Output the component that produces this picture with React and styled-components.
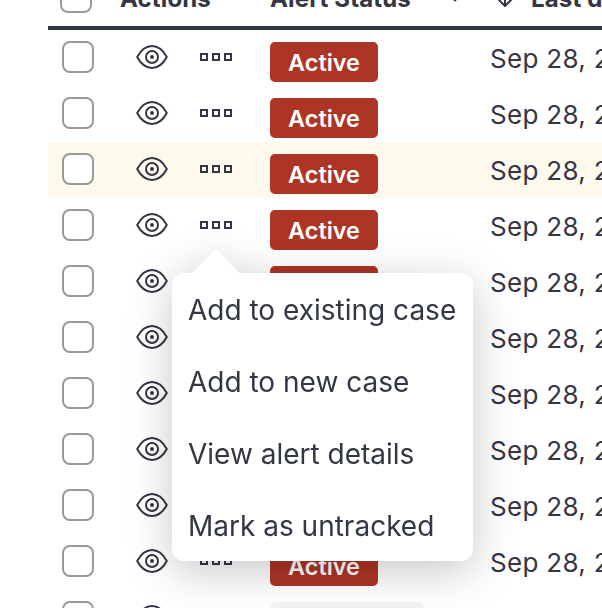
import React from "react";
import styled, { createGlobalStyle } from "styled-components";

const GlobalStyle = createGlobalStyle`
  html, body {
    margin: 0;
    padding: 0;
    background: #ffffff;
    overflow: hidden;
  }
  body {
    font-family: Inter, "Liberation Sans", sans-serif;
    color: #333644;
  }
`;

const Page = styled.div`
  position: relative;
  width: 602px;
  height: 608px;
  overflow: hidden;
  padding-left: 48px;
  box-sizing: border-box;
`;

const HeaderRow = styled.div`
  display: grid;
  grid-template-columns: 72px 150px 220px 1fr;
  height: 56px;
  margin-top: -30px;
  width: 600px;
  border-bottom: 4px solid #333644;
  font-size: 24px;
  font-weight: 700;
  letter-spacing: 0.15px;
  white-space: nowrap;
`;

const HeaderCheckCell = styled.div`
  padding: 11px 0 0 12px;
`;

const HeaderCell = styled.div`
  display: flex;
  align-items: center;
  height: 56px;
`;

const StatusHeader = styled(HeaderCell)`
  gap: 38px;
`;

const SortHeader = styled(HeaderCell)`
  padding-left: 6px;
  gap: 17px;
`;

const Row = styled.div`
  display: grid;
  grid-template-columns: 72px 150px 220px 1fr;
  height: 56px;
  width: 600px;
  background: ${(p) => (p.$highlight ? "#fff8ec" : "transparent")};
`;

const CheckCell = styled.div`
  padding: 11px 0 0 14px;
`;

const Checkbox = styled.div`
  width: 32px;
  height: 32px;
  box-sizing: border-box;
  border: 2px solid #999999;
  border-radius: 8px;
  background: #ffffff;
`;

const ActionsCell = styled.div`
  display: flex;
  align-items: flex-start;
  padding: 15px 0 0 16px;
  gap: 32px;
`;

const Dots = styled.div`
  display: flex;
  gap: 4px;
  margin-top: 8px;
`;

const Dot = styled.span`
  width: 8px;
  height: 8px;
  box-sizing: border-box;
  border: 2px solid #333644;
`;

const StatusCell = styled.div`
  padding-top: 12px;
`;

const Badge = styled.div`
  display: flex;
  align-items: center;
  justify-content: center;
  width: ${(p) => (p.$pending ? "154px" : "108px")};
  height: 40px;
  border-radius: 5px;
  background: ${(p) => (p.$pending ? "#f3f4f6" : "#ad3526")};
  color: #ffffff;
  font-size: 23.4px;
  font-weight: 600;
`;

const DateCell = styled.div`
  font-size: 26px;
  letter-spacing: 0.3px;
  line-height: 30px;
  padding-top: 14px;
  white-space: nowrap;
  overflow: hidden;
`;

const Popover = styled.div`
  position: absolute;
  left: 172px;
  top: 273px;
  width: 301px;
  filter: drop-shadow(0 10px 22px rgba(0, 0, 0, 0.22));
`;

const Arrow = styled.div`
  position: absolute;
  left: 27px;
  top: -17px;
  width: 34px;
  height: 34px;
  background: #ffffff;
  transform: rotate(45deg);
`;

const Menu = styled.div`
  position: relative;
  background: #ffffff;
  border-radius: 12px;
`;

const MenuItem = styled.div`
  display: flex;
  align-items: center;
  height: 72px;
  padding: 2px 0 0 16px;
  box-sizing: border-box;
  font-size: 28px;
  white-space: nowrap;
`;

function Eye() {
  return (
    <svg width="32" height="24" viewBox="0 0 32 24" fill="none" stroke="#333644" strokeWidth="2">
      <path d="M1.2 12C5 5 10 1 16 1C22 1 27 5 30.8 12C27 19 22 23 16 23C10 23 5 19 1.2 12Z" strokeLinejoin="round" />
      <circle cx="16" cy="12" r="6" />
      <circle cx="16" cy="12" r="2" fill="#333644" stroke="none" />
    </svg>
  );
}

function Chevron() {
  return (
    <svg width="12" height="8" viewBox="0 0 12 8" fill="none" stroke="#333644" strokeWidth="2.5">
      <path d="M1 1L6 6L11 1" />
    </svg>
  );
}

function SortDiamond() {
  return (
    <svg width="18" height="18" viewBox="0 0 18 18" fill="none" stroke="#333644" strokeWidth="2">
      <path d="M9 1L17 9L9 17L1 9Z" strokeLinejoin="round" />
      <path d="M9 1V17" />
    </svg>
  );
}

const rows = [0, 1, 2, 3, 4, 5, 6, 7, 8, 9];
const menuItems = [
  "Add to existing case",
  "Add to new case",
  "View alert details",
  "Mark as untracked",
];

export default function App() {
  return (
    <>
      <GlobalStyle />
      <Page>
        <HeaderRow>
          <HeaderCheckCell>
            <Checkbox />
          </HeaderCheckCell>
          <HeaderCell>Actions</HeaderCell>
          <StatusHeader>
            Alert Status
            <Chevron />
          </StatusHeader>
          <SortHeader>
            <SortDiamond />
            Last d
          </SortHeader>
        </HeaderRow>
        {rows.map((i) => (
          <Row key={i} $highlight={i === 2}>
            <CheckCell>
              <Checkbox />
            </CheckCell>
            <ActionsCell>
              <Eye />
              <Dots>
                <Dot />
                <Dot />
                <Dot />
              </Dots>
            </ActionsCell>
            <StatusCell>
              <Badge>Active</Badge>
            </StatusCell>
            <DateCell>Sep 28, 2022</DateCell>
          </Row>
        ))}
        <Row>
          <CheckCell>
            <Checkbox />
          </CheckCell>
          <ActionsCell>
            <Eye />
          </ActionsCell>
          <StatusCell>
            <Badge $pending />
          </StatusCell>
          <DateCell />
        </Row>
        <Popover>
          <Arrow />
          <Menu>
            {menuItems.map((item) => (
              <MenuItem key={item}>{item}</MenuItem>
            ))}
          </Menu>
        </Popover>
      </Page>
    </>
  );
}
